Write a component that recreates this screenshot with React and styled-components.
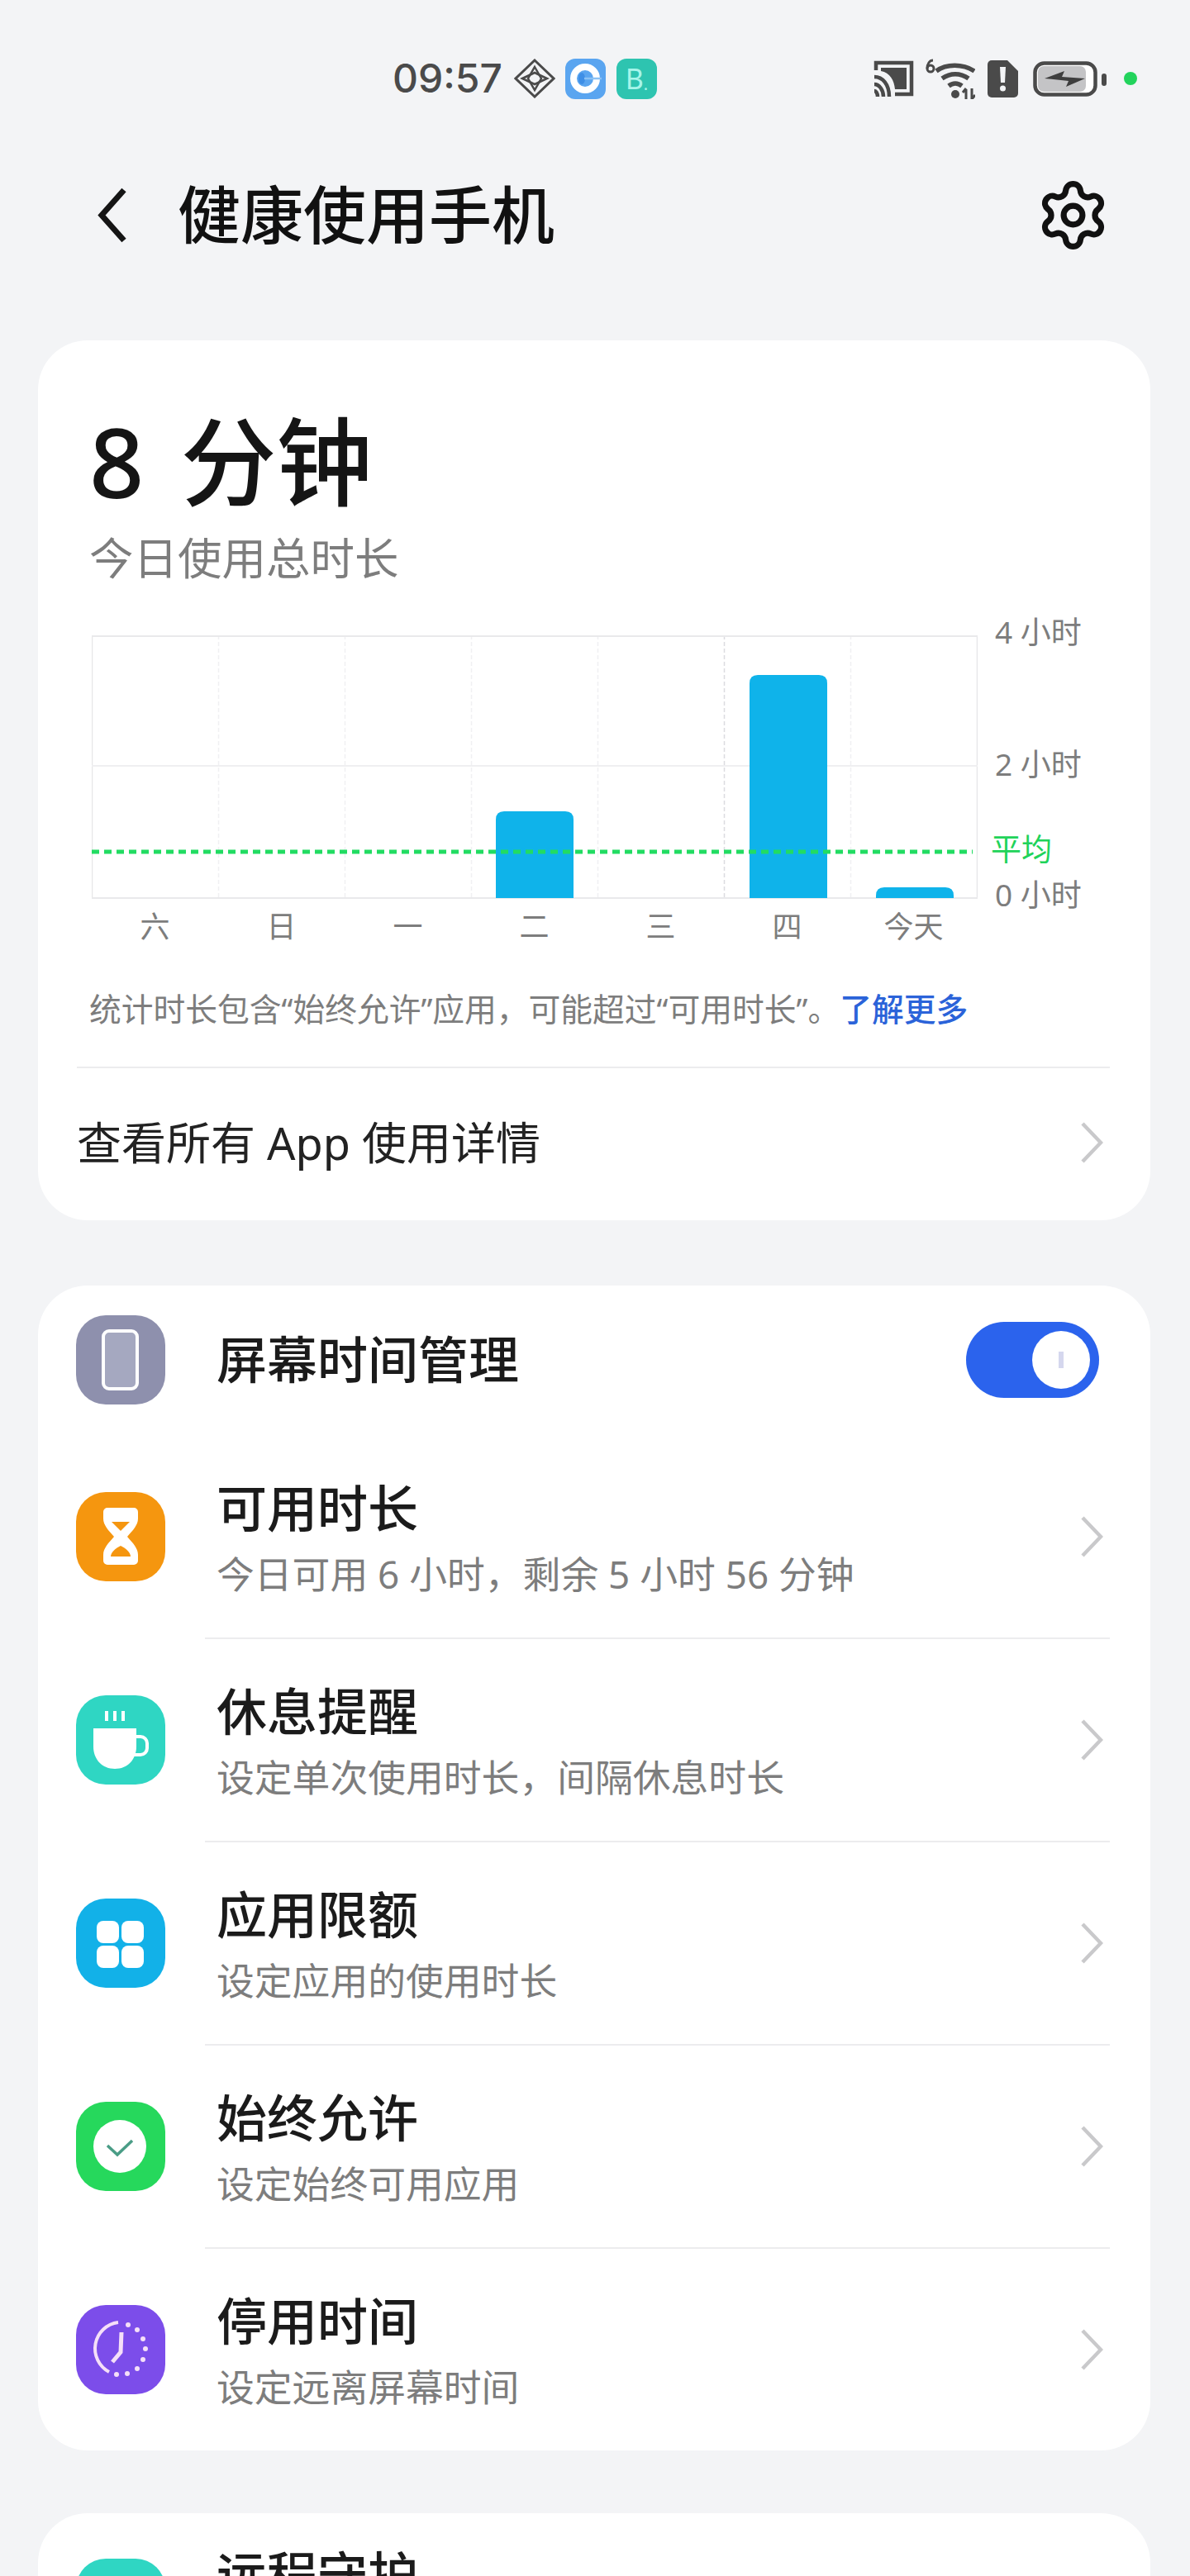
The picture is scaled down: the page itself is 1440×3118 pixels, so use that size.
import React from "react";
import styled, { createGlobalStyle } from "styled-components";
import { Settings } from "lucide-react";

const GlobalStyle = createGlobalStyle`
    html, body {
        margin: 0;
        padding: 0;
        background: #f3f4f6;
    }
    * {
        box-sizing: border-box;
    }
`;

const Page = styled.div`
    width: 1440px;
    height: 3118px;
    overflow: hidden;
    background: #f3f4f6;
    font-family: "Noto Sans", "Noto Sans CJK SC", sans-serif;
    color: #161616;
`;

const StatusBar = styled.div`
    height: 190px;
    padding: 0 64px 0 475px;
    display: flex;
    align-items: center;
    justify-content: space-between;
`;

const StatusGroup = styled.div`
    display: flex;
    align-items: center;
`;

const StatusSpacer = styled.div`
    width: ${props => props.$w}px;
`;

const Time = styled.span`
    font-family: "Inter", "Noto Sans", sans-serif;
    font-size: 48px;
    line-height: 50px;
    font-weight: 500;
    color: #4a4a4a;
    margin-right: 14px;
`;

const AppBadge = styled.div`
    width: 49px;
    height: 49px;
    margin-left: ${props => props.$gap || 12}px;
    border-radius: 12px;
    background: ${props => props.$color};
    display: flex;
    align-items: center;
    justify-content: center;
    color: #a8f5ea;
    font-size: 34px;
    line-height: 49px;
`;

const BadgeDot = styled.span`
    font-size: 20px;
    line-height: 20px;
    align-self: flex-end;
    margin-bottom: 8px;
`;

const GreenDot = styled.div`
    width: 16px;
    height: 16px;
    margin-left: 21px;
    border-radius: 50%;
    background: #22d35c;
`;

const Header = styled.div`
    height: 140px;
    padding: 0 96px 0 117px;
    display: flex;
    align-items: center;
`;

const BackSvg = styled.svg`
    flex: none;
    margin-right: 61px;
`;

const Title = styled.h1`
    flex: 1;
    margin: 0;
    font-size: 76px;
    line-height: 100px;
    font-weight: 500;
    color: #111;
`;

const CardList = styled.div`
    padding: 82px 48px 0 46px;
    display: flex;
    flex-direction: column;
`;

const Card = styled.section`
    background: #fff;
    border-radius: 60px;
    margin-bottom: ${props => props.$mb || 0}px;
`;

const Summary = styled.div`
    padding: 81px 46px 0 62px;
`;

const BigValue = styled.div`
    font-size: 116px;
    line-height: 130px;
    font-weight: 500;
    word-spacing: 14px;
    color: #151515;
`;

const SubValue = styled.div`
    margin-top: 23px;
    font-size: 53.5px;
    line-height: 60px;
    color: #7d7d7d;
`;

const ChartRow = styled.div`
    margin-top: 63px;
    margin-left: 3px;
    display: flex;
    align-items: flex-start;
`;

const PlotSvg = styled.svg`
    display: block;
    flex: none;
`;

const Axis = styled.div`
    margin: -22px 0 -20px 18px;
    display: flex;
    flex-direction: column;
`;

const AxisLabel = styled.span`
    margin-top: ${props => props.$top || 0}px;
    margin-left: ${props => (props.$green ? -2 : 3)}px;
    font-size: 37px;
    line-height: 36px;
    white-space: nowrap;
    color: ${props => (props.$green ? "#1fd35a" : "#7d7d7d")};
`;

const Days = styled.div`
    margin-top: 13px;
    margin-left: 3px;
    width: 1071px;
    display: grid;
    grid-template-columns: repeat(7, 1fr);
`;

const Day = styled.span`
    text-align: center;
    font-size: 36px;
    line-height: 40px;
    color: #7d7d7d;
`;

const Note = styled.p`
    margin: 54px 0 0;
    font-size: 38.75px;
    line-height: 50px;
    color: #7d7d7d;
    white-space: nowrap;
`;

const NoteLink = styled.span`
    color: #2b63d9;
    font-weight: 500;
`;

const Divider = styled.div`
    height: 2px;
    background: #ececee;
    margin: ${props => props.$top || 0}px 49px 0 ${props => props.$inset}px;
`;

const FooterRow = styled.div`
    height: 184px;
    padding: 0 57px 4px 47px;
    display: flex;
    align-items: center;
    justify-content: space-between;
`;

const FooterText = styled.span`
    font-size: 54px;
    line-height: 70px;
    color: #222;
`;

const ChevronSvg = styled.svg`
    flex: none;
`;

const Row = styled.div`
    height: ${props => props.$h || 244}px;
    margin-bottom: ${props => props.$mb || 0}px;
    padding: ${props => props.$pad || 0}px 57px 0 46px;
    display: flex;
    align-items: ${props => props.$align || "center"};
`;

const IconTile = styled.div`
    flex: none;
    width: 108px;
    height: 108px;
    margin-top: ${props => props.$top || 0}px;
    margin-right: 62px;
    border-radius: 36px;
    background: ${props => props.$color};
`;

const IconSvg = styled.svg`
    display: block;
`;

const RowText = styled.div`
    flex: 1;
    padding-top: ${props => props.$pt || 0}px;
    display: flex;
    flex-direction: column;
`;

const RowTitle = styled.span`
    font-size: 61px;
    line-height: 70px;
    font-weight: 500;
    color: #1b1b1b;
`;

const RowSub = styled.span`
    margin-top: 14px;
    font-size: 45.8px;
    line-height: 60px;
    color: #7d7d7d;
`;

const Toggle = styled.div`
    width: 161px;
    height: 92px;
    margin-right: 5px;
    padding-right: 11px;
    border-radius: 46px;
    background: #2b63ed;
    display: flex;
    align-items: center;
    justify-content: flex-end;
`;

const Knob = styled.div`
    width: 70px;
    height: 70px;
    border-radius: 50%;
    background: #fff;
    display: flex;
    align-items: center;
    justify-content: center;
`;

const KnobTick = styled.div`
    width: 6px;
    height: 20px;
    background: #d5d7ee;
`;

const BARS = [
    { x: 489, y: 213, h: 105 },
    { x: 796, y: 48, h: 270 },
    { x: 949, y: 305, h: 13 },
];

const Chart = () => {
    const columns = [0, 1, 2, 3, 4, 5, 6, 7];
    return (
        <PlotSvg width="1072" height="320" viewBox="0 0 1072 320">
            {columns.map(i => (
                <line key={i} x1={i * 153 + 0.5} y1="0" x2={i * 153 + 0.5} y2="318"
                    stroke={i === 0 || i === 7 ? "#e6e6e8" : i === 5 ? "#dcdce0" : "#f0f0f2"}
                    strokeWidth="1.5" strokeDasharray={i === 0 || i === 7 ? "none" : "5 3"} />
            ))}
            <line x1="0" y1="1" x2="1072" y2="1" stroke="#e9e9eb" strokeWidth="2" />
            <line x1="0" y1="158" x2="1072" y2="158" stroke="#efeff1" strokeWidth="2" />
            <line x1="0" y1="318" x2="1072" y2="318" stroke="#e9e9eb" strokeWidth="2" />
            {BARS.map(bar => (
                <path key={bar.x} fill="#0fb3ea"
                    d={`M${bar.x} ${bar.y + bar.h} V${bar.y + Math.min(10, bar.h)} Q${bar.x} ${bar.y} ${bar.x + 10} ${bar.y} H${bar.x + 84} Q${bar.x + 94} ${bar.y} ${bar.x + 94} ${bar.y + Math.min(10, bar.h)} V${bar.y + bar.h} Z`} />
            ))}
            <line x1="0" y1="262" x2="1066" y2="262" stroke="#22dc62" strokeWidth="5" strokeDasharray="9 6" />
        </PlotSvg>
    );
};

const Chevron = () => (
    <ChevronSvg width="28" height="52" viewBox="0 0 28 52" fill="none" stroke="#c9c9cb" strokeWidth="4.500">
        <path d="M3 3L25 26L3 49" />
    </ChevronSvg>
);

const BackIcon = () => (
    <BackSvg width="37" height="67" viewBox="0 0 37 67" fill="none" stroke="#151515" strokeWidth="7">
        <path d="M33 3L6 33.500L33 64" />
    </BackSvg>
);

const Icon = ({ children }) => (
    <IconSvg width="108" height="108" viewBox="0 0 108 108">{children}</IconSvg>
);

const PhoneIcon = () => (
    <Icon>
        <rect x="33" y="19" width="41" height="70" rx="7" fill="#a5a8c0" stroke="#fff" strokeWidth="4" />
    </Icon>
);

const HourglassIcon = () => (
    <Icon>
        <path fill="#fff" d="M38 19H70a5 5 0 0 1 5 5v8c0 8-6 14-13 22c7 8 13 14 13 22v7a5 5 0 0 1-5 5H38a5 5 0 0 1-5-5v-7c0-8 6-14 13-22c-7-8-13-14-13-22v-8a5 5 0 0 1 5-5z" />
        <path fill="#f5960f" d="M43 36H65L54 47Z" />
        <path fill="#f5960f" d="M42 78c0-5 6-10 12-13c6 3 12 8 12 13Z" />
    </Icon>
);

const CupIcon = () => (
    <Icon>
        <path stroke="#fff" strokeWidth="4" d="M37 19V31M47 19V31M57 19V31" />
        <path fill="#fff" d="M21 40H73V62C73 78 62 89 47 89C32 89 21 78 21 62Z" />
        <path fill="none" stroke="#fff" strokeWidth="4" d="M72 50H78a8 8 0 0 1 8 8v6a8 8 0 0 1-8 8H68" />
    </Icon>
);

const GridIcon = () => (
    <Icon>
        <rect x="25" y="27" width="27" height="27" rx="8" fill="#fff" />
        <rect x="55" y="27" width="27" height="27" rx="8" fill="#fff" />
        <rect x="25" y="57" width="27" height="27" rx="8" fill="#fff" />
        <rect x="55" y="57" width="27" height="27" rx="8" fill="#fff" />
    </Icon>
);

const CheckIcon = () => (
    <Icon>
        <circle cx="53" cy="54" r="32" fill="#fff" />
        <path fill="none" stroke="#4a9d86" strokeWidth="3.5" d="M38 53L50 64L68 47" />
    </Icon>
);

const CLOCK_DOTS = [[63, 24], [74, 30], [81, 41], [84, 53], [81, 66], [74, 77], [62, 83], [49, 84]];

const ClockIcon = () => (
    <Icon>
        <path fill="none" stroke="#f5dff8" strokeWidth="4" d="M51 21A32 32 0 0 0 40 81" />
        <path fill="none" stroke="#f5dff8" strokeWidth="5" d="M55 33L54 57L44 69" />
        {CLOCK_DOTS.map(([cx, cy]) => (
            <circle key={cx + "-" + cy} cx={cx} cy={cy} r="3" fill="#f5dff8" />
        ))}
    </Icon>
);

const DiamondIcon = () => (
    <svg width="50" height="48" viewBox="0 0 50 48" fill="none" stroke="#4a4a4a" strokeWidth="3">
        <path d="M25 2L48 24L25 46L2 24Z" />
        <path d="M25 10L33 24L25 38L17 24Z" strokeWidth="2.500" />
        <path d="M10 24L25 17L40 24L25 31Z" strokeWidth="2.500" />
    </svg>
);

const EyeIcon = () => (
    <svg width="42" height="42" viewBox="0 0 42 42">
        <circle cx="21" cy="21" r="14" fill="none" stroke="#fff" strokeWidth="8" />
        <ellipse cx="17" cy="21" rx="4" ry="7" fill="#3f8fe6" />
        <path d="M20 21H41" stroke="#8bc2f5" strokeWidth="2.500" />
    </svg>
);

const CastIcon = () => (
    <svg width="49" height="44" viewBox="0 0 49 44" fill="none" stroke="#4a4a4a">
        <path d="M3 12V3H46V41H26" strokeWidth="4.500" />
        <path d="M9 9H40V35H26C25 24 20 15 9 13Z" fill="#4a4a4a" stroke="none" />
        <path d="M1 20C11 20 19 29 19 44" strokeWidth="4.500" />
        <path d="M1 29C7 29 12 36 12 44" strokeWidth="4.500" />
        <path d="M1 37C3 37 5 40 5 44" strokeWidth="4.500" />
    </svg>
);

const WifiIcon = () => (
    <svg width="60" height="50" viewBox="0 0 60 50" fill="none" stroke="#4a4a4a" strokeWidth="5.500">
        <circle cx="6" cy="13" r="4" strokeWidth="3" />
        <path d="M9 3C5 3 2 7 2 13" strokeWidth="3" />
        <path d="M13 16C25 7 45 7 59 16" />
        <path d="M20 25C30 18 42 18 52 25" />
        <path d="M28 34C33 30 39 30 44 34" />
        <circle cx="36" cy="44" r="5" fill="#4a4a4a" stroke="none" />
        <path d="M49 50V38M45 42L49 37M56 37V50M56 50L60 45" strokeWidth="3" />
    </svg>
);

const SimIcon = () => (
    <svg width="37" height="45" viewBox="0 0 37 45">
        <path fill="#4a4a4a" d="M5 0H24L37 13V40a5 5 0 0 1-5 5H5a5 5 0 0 1-5-5V5a5 5 0 0 1 5-5Z" />
        <path fill="#f3f4f6" d="M15 8H22L21 27H16Z" />
        <circle cx="18.500" cy="34" r="3.500" fill="#f3f4f6" />
    </svg>
);

const BatteryIcon = () => (
    <svg width="89" height="43" viewBox="0 0 89 43">
        <rect x="2.500" y="2.500" width="73" height="38" rx="11" fill="#fff" stroke="#4a4a4a" strokeWidth="4.500" />
        <rect x="6" y="6" width="58" height="31" rx="7" fill="#c4c4c6" />
        <path fill="#3e3e3e" d="M14 21L38 12L35 19L63 21L40 31L43 24Z" />
        <rect x="83" y="15" width="6" height="15" rx="3" fill="#4a4a4a" />
    </svg>
);

const FeatureRow = ({ color, icon, title, sub }) => (
    <Row>
        <IconTile $color={color}>{icon}</IconTile>
        <RowText $pt={6}>
            <RowTitle>{title}</RowTitle>
            <RowSub>{sub}</RowSub>
        </RowText>
        <Chevron />
    </Row>
);

const FEATURES = [
    { color: "#f5960f", icon: <HourglassIcon />, title: "可用时长", sub: "今日可用 6 小时，剩余 5 小时 56 分钟" },
    { color: "#2fd6c3", icon: <CupIcon />, title: "休息提醒", sub: "设定单次使用时长，间隔休息时长" },
    { color: "#12b1e8", icon: <GridIcon />, title: "应用限额", sub: "设定应用的使用时长" },
    { color: "#26d85c", icon: <CheckIcon />, title: "始终允许", sub: "设定始终可用应用" },
    { color: "#7c4dea", icon: <ClockIcon />, title: "停用时间", sub: "设定远离屏幕时间" },
];

const App = () => {
    return (
        <Page>
            <GlobalStyle />
            <StatusBar>
                <StatusGroup>
                    <Time>09:57</Time>
                    <DiamondIcon />
                    <AppBadge $color="#5aa5f0"><EyeIcon /></AppBadge>
                    <AppBadge $color="#2ec4b0" $gap={13}>B<BadgeDot>.</BadgeDot></AppBadge>
                </StatusGroup>
                <StatusGroup>
                    <CastIcon />
                    <StatusSpacer $w={14} />
                    <WifiIcon />
                    <StatusSpacer $w={15} />
                    <SimIcon />
                    <StatusSpacer $w={18} />
                    <BatteryIcon />
                    <GreenDot />
                </StatusGroup>
            </StatusBar>

            <Header>
                <BackIcon />
                <Title>健康使用手机</Title>
                <Settings size={91} strokeWidth={1.9} color="#111" />
            </Header>

            <CardList>
                <Card $mb={79}>
                    <Summary>
                        <BigValue>8 分钟</BigValue>
                        <SubValue>今日使用总时长</SubValue>
                        <ChartRow>
                            <Chart />
                            <Axis>
                                <AxisLabel>4 小时</AxisLabel>
                                <AxisLabel $top={124}>2 小时</AxisLabel>
                                <AxisLabel $top={67} $green>平均</AxisLabel>
                                <AxisLabel $top={19}>0 小时</AxisLabel>
                            </Axis>
                        </ChartRow>
                        <Days>
                            {["六", "日", "一", "二", "三", "四", "今天"].map(day => (
                                <Day key={day}>{day}</Day>
                            ))}
                        </Days>
                        <Note>统计时长包含“始终允许”应用，可能超过“可用时长”。<NoteLink>了解更多</NoteLink></Note>
                    </Summary>
                    <Divider $top={45} $inset={47} />
                    <FooterRow>
                        <FooterText>查看所有 App 使用详情</FooterText>
                        <Chevron />
                    </FooterRow>
                </Card>

                <Card $mb={76}>
                    <Row $h={180} $mb={2}>
                        <IconTile $color="#8e90ad"><PhoneIcon /></IconTile>
                        <RowText><RowTitle>屏幕时间管理</RowTitle></RowText>
                        <Toggle><Knob><KnobTick /></Knob></Toggle>
                    </Row>
                    {FEATURES.map((feature, i) => (
                        <React.Fragment key={feature.title}>
                            <FeatureRow {...feature} />
                            {i < FEATURES.length - 1 && <Divider $inset={202} />}
                        </React.Fragment>
                    ))}
                </Card>

                <Card>
                    <Row $h={300} $align="flex-start" $pad={40}>
                        <IconTile $color="#2fd6c3" $top={15} />
                        <RowText>
                            <RowTitle>远程守护</RowTitle>
                        </RowText>
                    </Row>
                </Card>
            </CardList>
        </Page>
    );
};

export default App;
